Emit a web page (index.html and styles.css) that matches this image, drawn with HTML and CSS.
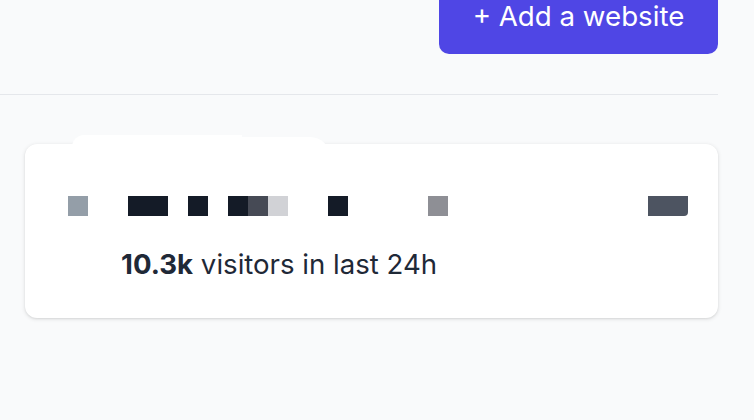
FILE: index.html
```html
<!DOCTYPE html>
<html>
<head>
<meta charset="utf-8">
<link rel="stylesheet" href="styles.css">
</head>
<body>
<div class="page">
  <header class="header">
    <button class="add-btn">+ Add a website</button>
  </header>
  <section class="sites">
    <div class="card">
      <div class="blob blob-a"></div>
      <div class="blob blob-b"></div>
      <div class="pixels">
        <span class="px c-slate" style="grid-column:1"></span>
        <span class="px c-dark" style="grid-column:4 / span 2"></span>
        <span class="px c-dark" style="grid-column:7"></span>
        <span class="px c-dark" style="grid-column:9"></span>
        <span class="px c-mid" style="grid-column:10"></span>
        <span class="px c-light" style="grid-column:11"></span>
        <span class="px c-dark" style="grid-column:14"></span>
        <span class="px c-gray" style="grid-column:19"></span>
        <span class="px c-steel cut" style="grid-column:30 / span 2"></span>
      </div>
      <p class="stat"><strong>10.3k</strong> visitors in last 24h</p>
    </div>
  </section>
</div>
</body>
</html>
```

FILE: styles.css
```css
html, body {
  margin: 0;
  padding: 0;
  background: #f9fafb;
  font-family: Inter, "Noto Sans", sans-serif;
  overflow: hidden;
}

.page {
  width: 718px;
  height: 420px;
}

.header {
  display: flex;
  justify-content: flex-end;
  margin-top: -21px;
  padding-bottom: 40px;
  border-bottom: 1px solid #e5e7eb;
}

.add-btn {
  font-family: Inter, "Noto Sans", sans-serif;
  font-size: 27.7px;
  line-height: 36px;
  color: #ffffff;
  background: #4f46e5;
  border: none;
  border-radius: 10px;
  padding: 19px 0 20px;
  width: 279px;
  text-align: center;
}

.sites {
  padding: 49px 0 0 25px;
}

.card {
  position: relative;
  background: #ffffff;
  border-radius: 12px;
  box-shadow: 0 1px 4px rgba(0, 0, 0, 0.12), 0 1px 2px rgba(0, 0, 0, 0.06);
  height: 174px;
  box-sizing: border-box;
  padding: 52px 0 0 43px;
}

.blob {
  position: absolute;
  background: #ffffff;
}

.blob-a {
  left: 47px;
  top: -9px;
  width: 170px;
  height: 20px;
  border-radius: 12px 0 0 0;
}

.blob-b {
  left: 170px;
  top: -7px;
  width: 135px;
  height: 20px;
  border-radius: 30px 30px 0 0;
}

.pixels {
  display: grid;
  grid-template-columns: repeat(31, 20px);
  grid-auto-rows: 20px;
}

.px {
  grid-row: 1;
  display: block;
}

.c-slate { background: #949ea8; }
.c-dark { background: #141b27; }
.c-mid { background: #464a55; }
.c-light { background: #d1d2d6; }
.c-gray { background: #8e8f95; }
.c-steel { background: #4d5461; }
.cut { border-bottom-right-radius: 4px; }

.stat {
  margin: 30px 0 0 53px;
  font-size: 27.6px;
  line-height: 36px;
  color: #1f2937;
}

.stat strong {
  font-weight: 700;
}
```
